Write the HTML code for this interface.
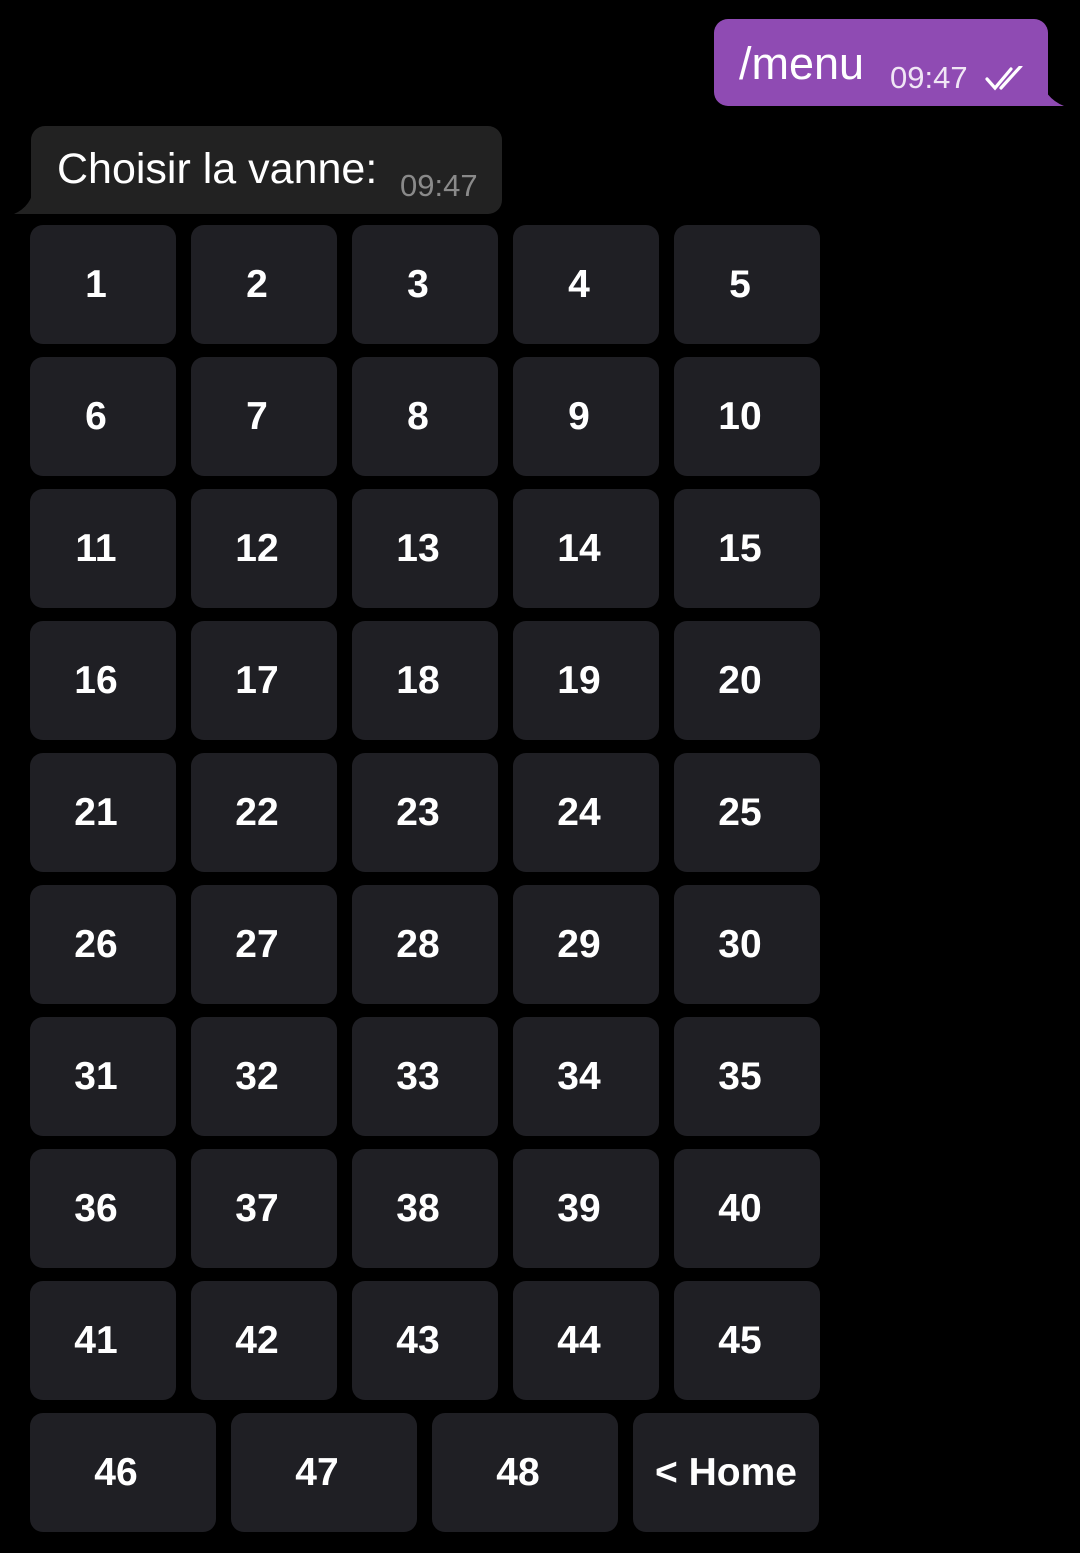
<!DOCTYPE html>
<html><head><meta charset="utf-8"><style>
html,body{margin:0;padding:0;background:#000;}
body{width:1080px;height:1553px;position:relative;overflow:hidden;font-family:"Liberation Sans",sans-serif;}
.b{position:absolute;width:146px;height:119px;box-sizing:border-box;padding-right:14px;background:#1f1f24;border-radius:13px;color:#fff;font-weight:bold;font-size:39px;display:flex;align-items:center;justify-content:center;}
.w{width:186px;}
.bub{position:absolute;color:#fff;}
</style></head><body>
<div class="bub" style="left:714px;top:19px;width:334px;height:87px;background:#8f4bb3;border-radius:14px 14px 0 14px;"></div>
<svg style="position:absolute;left:1040px;top:76px" width="26" height="30"><path d="M0 0 Q4 22 24 30 L0 30Z" fill="#8f4bb3"/></svg>
<div class="bub" style="left:739px;top:38px;font-size:45px;">/menu</div>
<div class="bub" style="left:890px;top:60px;font-size:31px;color:#f0e6f5">09:47</div>
<svg style="position:absolute;left:985px;top:66px" width="46" height="26"><path d="M2 13 L10 22 L26 3 M16 22 L36 0" stroke="#fff" stroke-width="3.2" fill="none" stroke-linecap="round"/></svg>

<div class="bub" style="left:31px;top:126px;width:471px;height:88px;background:#222222;border-radius:14px 14px 14px 0;"></div>
<svg style="position:absolute;left:14px;top:186px" width="20" height="28"><path d="M20 0 Q18 20 0 28 L20 28Z" fill="#222222"/></svg>
<div class="bub" style="left:57px;top:145px;font-size:43px;">Choisir la vanne:</div>
<div class="bub" style="left:400px;top:168px;font-size:31px;color:#8a8a8a">09:47</div>

<div id="g"></div>
<script>
var h='',n=1,xs=[30,191,352,513,674];
for(var r=0;r<9;r++)for(var c=0;c<5;c++){h+='<div class="b" style="left:'+xs[c]+'px;top:'+(225+r*132)+'px">'+(n++)+'</div>';}
var lx=[30,231,432,633],lt=['46','47','48','&lt; Home'];
for(var i=0;i<4;i++)h+='<div class="b w" style="left:'+lx[i]+'px;top:1413px;'+(i==3?'padding-right:0;':'')+'">'+lt[i]+'</div>';
document.getElementById('g').innerHTML=h;
</script>
</body></html>
